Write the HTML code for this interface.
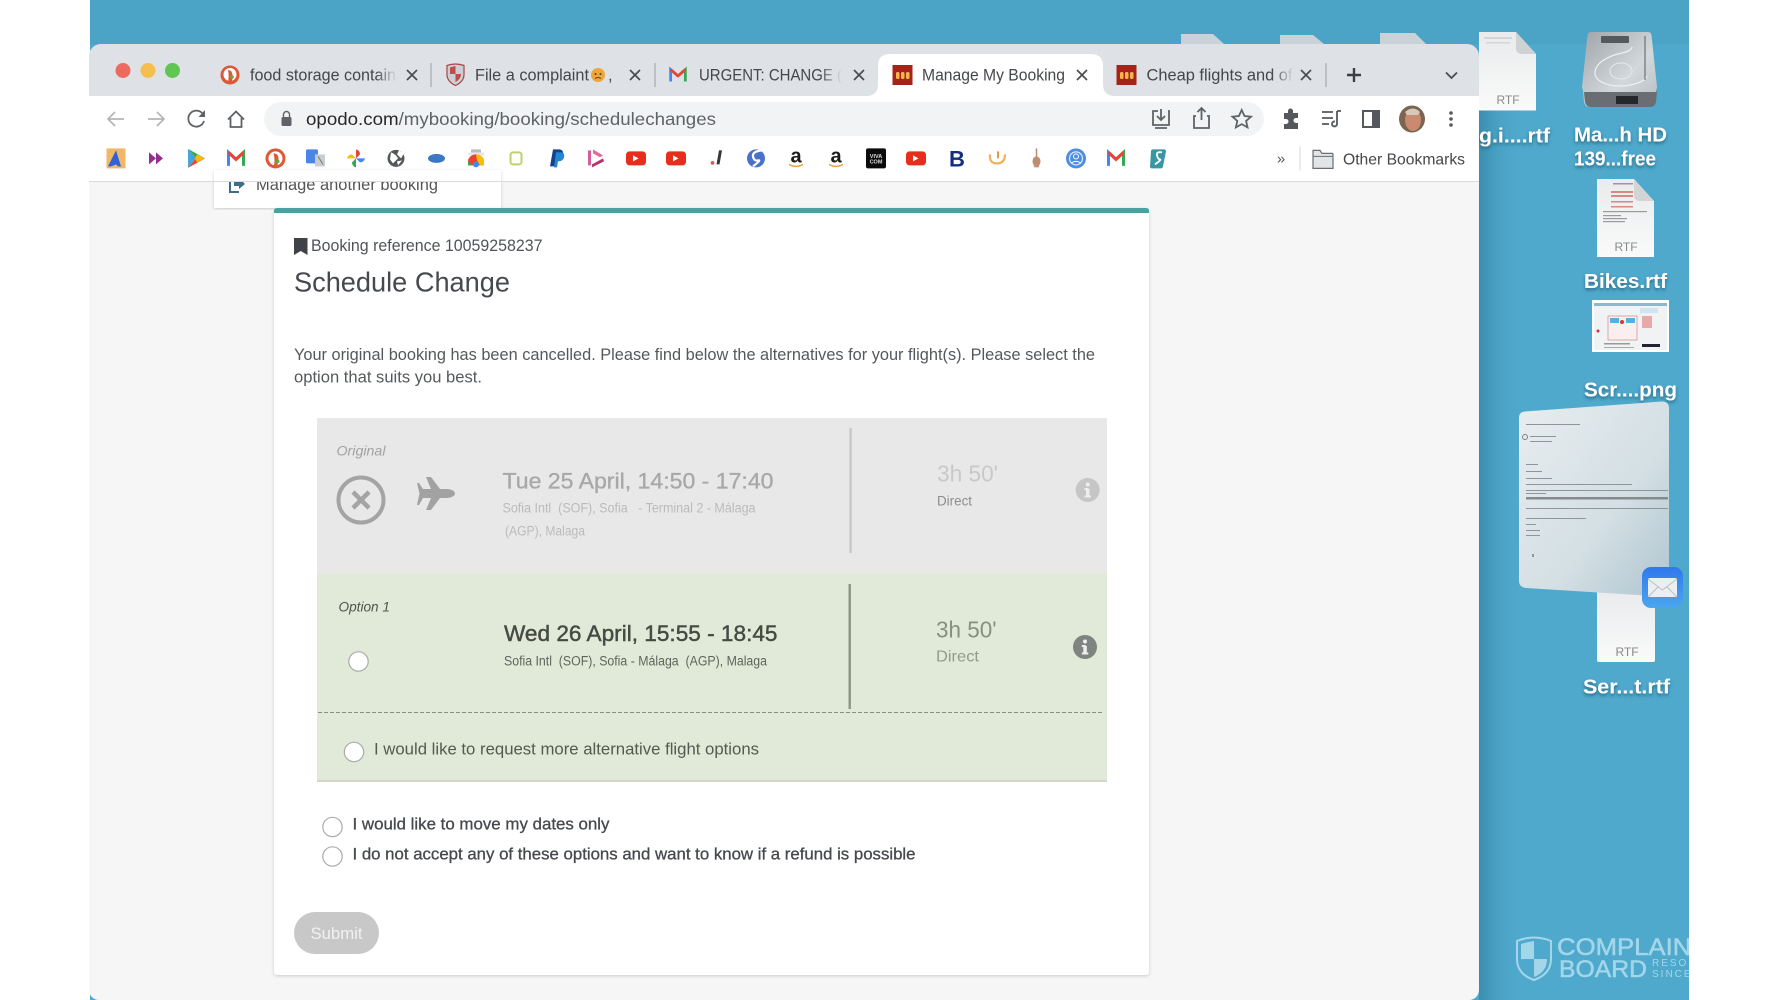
<!DOCTYPE html>
<html lang="en"><head><meta charset="utf-8"><title>Manage My Booking</title>
<style>html,body{margin:0;padding:0;width:1778px;height:1000px;overflow:hidden;background:#fff}svg{display:block;filter:blur(.35px)}text{font-family:"Liberation Sans",sans-serif}.t{font-size:16.5px;fill:#45474a}.x{stroke:#4a4c50;stroke-width:1.7;fill:none}.ic{stroke:#5f6368;stroke-width:1.8;fill:none}.lb{font-size:20px;font-weight:700;fill:#fff;filter:url(#ts)}.rtf{font-size:12px;fill:#8a8a8a;text-anchor:middle}.r{fill:#fff;stroke:#a9aca9;stroke-width:1.2}</style></head><body>
<svg width="1778" height="1000" viewBox="0 0 1778 1000" xmlns="http://www.w3.org/2000/svg">
<defs>
<filter id="ts" x="-10%" y="-30%" width="120%" height="180%"><feDropShadow dx="0" dy="2" stdDeviation="1.6" flood-color="#1d4f66" flood-opacity=".75"/></filter>
<filter id="sh" x="-5%" y="-5%" width="110%" height="110%"><feDropShadow dx="0" dy="1" stdDeviation="1.5" flood-color="#000" flood-opacity=".18"/></filter>
<linearGradient id="wshadow" x1="0" x2="1" y1="0" y2="0"><stop offset="0" stop-color="#2f7f9f" stop-opacity=".65"/><stop offset="1" stop-color="#4fa9cc" stop-opacity="0"/></linearGradient>
<linearGradient id="fade" x1="0" x2="1" y1="0" y2="0"><stop offset="0" stop-color="#dee1e5" stop-opacity="0"/><stop offset="1" stop-color="#dee1e5"/></linearGradient>
<linearGradient id="mailw" x1="0" x2="1" y1="0" y2="1"><stop offset="0" stop-color="#e8edef"/><stop offset=".6" stop-color="#d3dfe4"/><stop offset="1" stop-color="#afc4cf"/></linearGradient>
<linearGradient id="mailb" x1="0" x2="0" y1="0" y2="1"><stop offset="0" stop-color="#2f78ee"/><stop offset="1" stop-color="#4ba6ee"/></linearGradient>
<linearGradient id="hd" x1="0" x2="1" y1="0" y2="1"><stop offset="0" stop-color="#9fa4a9"/><stop offset=".6" stop-color="#d2d8dc"/><stop offset="1" stop-color="#b8bdc2"/></linearGradient>
<linearGradient id="doc" x1="0" x2="0" y1="0" y2="1"><stop offset="0" stop-color="#e9ebec"/><stop offset="1" stop-color="#fafafa"/></linearGradient>
<clipPath id="win"><path d="M101 44H1467a12 12 0 0 1 12 12V990a10 10 0 0 1-10 10H99a10 10 0 0 1-10-10V56a12 12 0 0 1 12-12Z"/></clipPath>
<clipPath id="top182"><rect x="200" y="182" width="320" height="40"/></clipPath>
</defs>

<!-- desktop -->
<rect x="90" y="0" width="1599" height="1000" fill="#4fa9cc"/>
<rect x="90" y="0" width="1599" height="44" fill="#4ba4c6"/>
<rect x="1479" y="44" width="44" height="956" fill="url(#wshadow)"/>

<!-- peeking files -->
<g fill="#c9d2d6"><path d="M1181 34h32l11 10h-43z"/><path d="M1280 35h33l11 9h-44z"/><path d="M1380 33h35l11 11h-46z"/></g>

<!-- RTF 1 -->
<path d="M1479 32h37l20 22v56.500h-57z" fill="url(#doc)"/><path d="M1516 32l20 22h-14q-6 0-6-6z" fill="#cfd2d3"/><g fill="#d2d4d5"><rect x="1484" y="37" width="28" height="2"/><rect x="1486" y="42" width="24" height="1.500"/></g><text class="rtf" x="1508" y="104" font-size="12">RTF</text>
<text class="lb" x="1479" y="142.500" textLength="71" lengthAdjust="spacingAndGlyphs">g.i....rtf</text>

<!-- HDD -->
<path d="M1592 32h56q3 0 3.500 3l5.500 52q0 2-1 3l-1 12q-1 5-6 5h-59q-5 0-6-5l-1-12q-1-1-1-3l5.500-52q.5-3 4.500-3z" fill="url(#hd)"/>
<path d="M1584 92h73l-1 10q-1 5-6 5h-59q-5 0-6-5z" fill="#6a6e73"/>
<rect x="1601" y="36" width="28" height="7" rx="1" fill="#55595e"/>
<path d="M1632 47q-.5 4-10 6c-14 3-27 10-27 20 0 8 12 13 24 13 11 0 25-3 28-10" fill="none" stroke="#eef0f2" stroke-width="1.200"/>
<ellipse cx="1621" cy="71" rx="11" ry="8" fill="none" stroke="#e8eaec"/>
<path d="M1645 36v44" stroke="#6d7176" stroke-width="1.200"/>
<rect x="1616" y="96" width="22" height="8" fill="#25282b"/>
<text class="lb" x="1574" y="141.500" textLength="93" lengthAdjust="spacingAndGlyphs">Ma...h HD</text>
<text class="lb" x="1574" y="165.500" textLength="82" lengthAdjust="spacingAndGlyphs">139...free</text>

<!-- Bikes -->
<path d="M1597 179h37l20 22v56h-57z" fill="url(#doc)"/><path d="M1634 179l20 22h-14q-6 0-6-6z" fill="#d2d4d5"/>
<g fill="#9a9a9a"><rect x="1613" y="183" width="20" height="1.500"/><rect x="1611" y="191" width="22" height="2" fill="#d98a80"/><rect x="1611" y="195" width="22" height="2" fill="#d98a80"/><rect x="1611" y="201" width="22" height="1.500" fill="#d98a80"/><rect x="1611" y="206" width="22" height="1.500" fill="#d98a80"/><rect x="1603" y="211" width="44" height="1.200"/><rect x="1603" y="215" width="18" height="1.200"/><rect x="1603" y="218" width="24" height="1.200"/><rect x="1603" y="221" width="22" height="1.200"/></g>
<text class="rtf" x="1626" y="251">RTF</text>
<text class="lb" x="1584" y="288" textLength="83" lengthAdjust="spacingAndGlyphs">Bikes.rtf</text>

<!-- screenshot -->
<rect x="1592" y="300" width="77" height="52" fill="#fff"/><rect x="1594" y="303" width="73" height="47" fill="#f0f2f3"/><rect x="1594" y="303" width="73" height="3" fill="#8fb7cc"/>
<rect x="1608" y="316" width="29" height="24" fill="#fbeeee" stroke="#c77" stroke-width=".6"/><rect x="1610" y="318" width="9" height="5" fill="#4fb2e4"/><rect x="1626" y="318" width="9" height="5" fill="#4fb2e4"/><circle cx="1622" cy="322" r="2" fill="#d33"/><rect x="1642" y="316" width="10" height="12" fill="#e9a9a9"/><rect x="1642" y="344" width="18" height="3" fill="#223"/>
<circle cx="1598" cy="331" r="1.500" fill="#c33"/><rect x="1640" y="308" width="18" height="5" fill="#cfe3f2"/><rect x="1604" y="343" width="26" height="1.500" fill="#999"/><rect x="1604" y="347" width="30" height="1" fill="#aaa"/>
<text class="lb" x="1584" y="396.500" textLength="93" lengthAdjust="spacingAndGlyphs">Scr....png</text>

<!-- Ser doc under mail -->
<path d="M1597 590h58v70a2 2 0 0 1-2 2h-54a2 2 0 0 1-2-2z" fill="url(#doc)"/><text class="rtf" x="1627" y="656">RTF</text>
<text class="lb" x="1583" y="693.500" textLength="87" lengthAdjust="spacingAndGlyphs">Ser...t.rtf</text>

<!-- mail window -->
<path d="M1525 411.500L1662 401.500q7 0 7 7V597L1526 588q-7-1-7-7V418q0-6 6-6.500z" fill="url(#mailw)"/>
<g fill="#8f969b"><rect x="1526" y="424" width="54" height="1"/><rect x="1530" y="436" width="26" height="1"/><rect x="1530" y="441" width="22" height="1"/><rect x="1526" y="464" width="12" height="1"/><rect x="1526" y="471" width="16" height="1"/><rect x="1526" y="478" width="26" height="1"/><rect x="1526" y="484" width="106" height="1"/><rect x="1526" y="490" width="142" height="1"/><rect x="1526" y="493" width="20" height="1"/><rect x="1526" y="497" width="142" height="2.500" fill="#858a8e"/><rect x="1526" y="508" width="142" height="1"/><rect x="1526" y="518" width="60" height="1"/><rect x="1526" y="524" width="10" height="1"/><rect x="1526" y="530" width="14" height="1"/><rect x="1526" y="535" width="14" height="1"/><circle cx="1525" cy="437" r="2.500" fill="none" stroke="#7a8085"/><rect x="1532" y="554" width="2" height="3"/></g>
<rect x="1642" y="567" width="41" height="41" rx="9" fill="url(#mailb)"/>
<rect x="1648" y="578" width="29" height="19" rx="2" fill="#eceff2"/><path d="M1648 579l14.500 11 14.500-11M1648 597l10-10M1677 597l-10-10" fill="none" stroke="#b9bec4"/>

<!-- watermark -->
<path d="M1517 941q17-7 34 0v18q0 15-17 21-17-6-17-21z" fill="none" stroke="#a4d6ea" stroke-width="2"/>
<path d="M1521 944q6-2 13-3v18h-13zM1534 959h13q0 13-13 18z" fill="#a4d6ea"/>
<text x="1557" y="955" font-size="24" fill="#a4d6ea" stroke="#a4d6ea" stroke-width=".5" textLength="150" lengthAdjust="spacingAndGlyphs">COMPLAINT</text>
<text x="1559" y="977" font-size="24" fill="#a4d6ea" stroke="#a4d6ea" stroke-width=".5" textLength="88" lengthAdjust="spacingAndGlyphs">BOARD</text>
<text x="1652" y="966" font-size="10" fill="#a4d6ea" letter-spacing="2">RESOLVED</text>
<text x="1652" y="977" font-size="10" fill="#a4d6ea" letter-spacing="2">SINCE</text>

<!-- window -->
<g clip-path="url(#win)">
<rect x="89" y="44" width="1390" height="52" fill="#dee1e5"/>
<rect x="89" y="96" width="1390" height="86" fill="#fff"/>
<rect x="89" y="181" width="1390" height="1" fill="#d8dadc"/>
<rect x="89" y="182" width="1390" height="818" fill="#f6f6f6"/>

<circle cx="123" cy="70.500" r="7.500" fill="#ed6a5e"/><circle cx="148" cy="70.500" r="7.500" fill="#f4bf4f"/><circle cx="172.500" cy="70.500" r="7.500" fill="#61c554"/>

<!-- active tab -->
<path d="M866 96q12 0 12-12V66q0-12 12-12h201q12 0 12 12v18q0 12 12 12z" fill="#fff"/>

<!-- tab 1 -->
<circle cx="230" cy="75" r="9.500" fill="#de5833"/><circle cx="230" cy="74.500" r="6.500" fill="#fff"/><path d="M228 70q4 0 4.500 5t-2 9h-3q2-7 .5-14z" fill="#de5833"/><circle cx="232" cy="77" r="1.800" fill="#67a742"/>
<text class="t" x="250" y="80.500" textLength="146" lengthAdjust="spacingAndGlyphs">food storage contain</text>
<rect x="376" y="62" width="21" height="26" fill="url(#fade)"/>
<path class="x" d="M407 70l10 10M417 70l-10 10"/>
<rect x="430.500" y="63" width="1" height="24" fill="#9b9ea2"/>
<!-- tab 2 -->
<path d="M447 65.500q8.500-3 17 0v9q0 7-8.500 11-8.500-4-8.500-11z" fill="#c9d0d4" stroke="#a44" stroke-width="1.200"/><path d="M450 67.500l5.500-1.500v8h-5.500zM455.500 74h5.500q0 5-5.500 8z" fill="#c34a4a"/>
<text class="t" x="475" y="80.500" textLength="114" lengthAdjust="spacingAndGlyphs">File a complaint</text>
<circle cx="598" cy="75" r="7" fill="#eda63a"/><circle cx="595.500" cy="74" r="1" fill="#6b3a1a"/><circle cx="600.500" cy="74" r="1" fill="#6b3a1a"/><path d="M595 78.500q3-2 6 0" stroke="#6b3a1a" fill="none"/>
<text class="t" x="608" y="80.500">,</text>
<path class="x" d="M630 70l10 10M640 70l-10 10"/>
<rect x="654.500" y="63" width="1" height="24" fill="#9b9ea2"/>
<!-- tab 3 -->
<g transform="translate(678,75) scale(.92)"><path d="M-8 7V-6L0 1" fill="none" stroke="#4285f4" stroke-width="3"/><path d="M8 7V-6L0 1" fill="none" stroke="#34a853" stroke-width="3"/><path d="M-8 -6L0 1 8 -6" fill="none" stroke="#ea4335" stroke-width="3"/></g>
<text class="t" x="699" y="80.500" textLength="143" lengthAdjust="spacingAndGlyphs">URGENT: CHANGE (</text>
<rect x="820" y="62" width="22" height="26" fill="url(#fade)"/>
<path class="x" d="M854 70l10 10M864 70l-10 10"/>
<!-- tab 4 -->
<rect x="892.500" y="65" width="20" height="20" fill="#a6231a"/><g fill="#f2b84b"><rect x="896" y="72" width="3.500" height="7" rx="1.500"/><rect x="901" y="72" width="3.500" height="7" rx="1.500"/><rect x="906" y="72" width="3.500" height="7" rx="1.500"/></g>
<text class="t" x="922" y="80.500" textLength="143" lengthAdjust="spacingAndGlyphs">Manage My Booking</text>
<path class="x" d="M1077 70l10 10M1087 70l-10 10"/>
<!-- tab 5 -->
<rect x="1116.500" y="65" width="20" height="20" fill="#a6231a"/><g fill="#f2b84b"><rect x="1120" y="72" width="3.500" height="7" rx="1.500"/><rect x="1125" y="72" width="3.500" height="7" rx="1.500"/><rect x="1130" y="72" width="3.500" height="7" rx="1.500"/></g>
<text class="t" x="1146.500" y="80.500" textLength="146" lengthAdjust="spacingAndGlyphs">Cheap flights and of</text>
<rect x="1272" y="62" width="22" height="26" fill="url(#fade)"/>
<path class="x" d="M1301 70l10 10M1311 70l-10 10"/>
<rect x="1325.500" y="63" width="1" height="24" fill="#9b9ea2"/>
<path d="M1354 68v14M1347 75h14" stroke="#3c3e42" stroke-width="2.400" fill="none"/>
<path d="M1446 72.500l5.500 5.500 5.500-5.500" fill="none" stroke="#4a4c50" stroke-width="1.800"/>

<!-- toolbar -->
<rect x="264" y="102" width="1000" height="34" rx="17" fill="#f1f3f4"/>
<path d="M123 119h-16M114 112l-7 7 7 7" fill="none" stroke="#b2b5b8" stroke-width="1.700" transform="translate(1,0)"/>
<path d="M149 119h16M158 112l7 7-7 7" fill="none" stroke="#b2b5b8" stroke-width="1.700" transform="translate(-1,0)"/>
<path class="ic" d="M203.500 115a8 8 0 1 0 .5 6"/><path d="M205 110v7h-6.500z" fill="#5f6368"/>
<path class="ic" d="M228 119.500l8-8 8 8M230.500 118v9h11v-9"/>
<rect x="281.500" y="117" width="10" height="9" rx="1.500" fill="#5f6368"/><path d="M283.500 117v-2.500a3 3 0 0 1 6 0v2.500" fill="none" stroke="#5f6368" stroke-width="1.400"/>
<text x="306" y="125" font-size="17.500" textLength="410" lengthAdjust="spacingAndGlyphs"><tspan fill="#26282b">opodo.com</tspan><tspan fill="#5f6368">/mybooking/booking/schedulechanges</tspan></text>
<path class="ic" d="M1158 111h-5v14h16v-14h-1M1161 109v11M1157 116l4 4 4-4M1155 128h12" stroke="#4a4d52"/>
<path class="ic" d="M1196 116h-2v12h15v-12h-2M1201.500 120v-12M1197.500 112l4-4 4 4" stroke="#4a4d52"/>
<path class="ic" d="M1241.700 110l2.800 6 6.500.7-4.900 4.300 1.400 6.400-5.800-3.300-5.800 3.300 1.400-6.400-4.900-4.300 6.500-.7z" stroke="#4a4d52"/>
<path d="M1285 113h4v-2a2.500 2.500 0 0 1 5 0v2h5v5h-2a2.500 2.500 0 0 0 0 5h2v6h-14v-5h2a2.500 2.500 0 0 0 0-5h-2z" fill="#55585c" transform="translate(-1,0)"/>
<path d="M1323 112h11M1323 118h11M1323 124h7M1338 111v13a2.500 2.500 0 1 1-2-2.500M1338 111h4" fill="none" stroke="#55585c" stroke-width="1.800" transform="translate(-1,0)"/>
<rect x="1363" y="111" width="16" height="16" fill="none" stroke="#55585c" stroke-width="2"/><rect x="1372" y="111" width="7" height="16" fill="#55585c"/>
<ellipse cx="1412" cy="119" rx="13" ry="13.500" fill="#7a6650"/><ellipse cx="1413" cy="120" rx="8" ry="11" fill="#c98a70"/><path d="M1405 112q8-7 15 0l-2 3h-11z" fill="#d8c8bc"/>
<g fill="#55585c"><circle cx="1451" cy="113" r="1.800"/><circle cx="1451" cy="119" r="1.800"/><circle cx="1451" cy="125" r="1.800"/></g>

<!-- bookmarks -->
<g transform="translate(0,-.6)">
<rect x="106.500" y="149" width="19" height="20" fill="#efb768"/><path d="M116 151l5 16h-3l-2-2-5 2h-3z" fill="#2e62d9"/>
<path d="M149 153v12l7-6zM156 153v12l7-6z" fill="#93308f"/>
<path d="M188 149.500l8 9.500-8 9.500z" fill="#4aa4d8"/><path d="M188 149.500l8 9.500 9 0z" fill="#34a853"/><path d="M188 168.500l8-9.500 9 0z" fill="#ea4335"/><path d="M197 155l7.500 4-7.500 4-2-4z" fill="#fbbc04"/>
<g transform="translate(236,159)"><path d="M-7.500 7.500V-6L0 1" fill="none" stroke="#4285f4" stroke-width="3"/><path d="M7.500 7.500V-6L0 1" fill="none" stroke="#34a853" stroke-width="3"/><path d="M-7.500 -6L0 1 7.500 -6" fill="none" stroke="#ea4335" stroke-width="3"/></g>
<g transform="translate(275.500,159)"><circle r="10" fill="#de5833"/><circle r="7" fill="#fff"/><path d="M-2-5q5 0 5 5t-2 9h-3q2-7 0-14z" fill="#de5833"/><circle cx="2" cy="3" r="2" fill="#67a742"/></g>
<rect x="306" y="150" width="12" height="14" rx="1.500" fill="#4a86e8"/><rect x="315" y="155" width="10" height="12" fill="#c9ccd0"/><path d="M318 157l5 8" stroke="#777"/>
<g transform="translate(356,159)"><path d="M0 0V-9a5 5 0 0 1 4 5z" fill="#ea4335"/><path d="M0 0H9a5 5 0 0 1-5 4z" fill="#4285f4"/><path d="M0 0V9a5 5 0 0 1-4-5z" fill="#34a853"/><path d="M0 0H-9a5 5 0 0 1 5-4z" fill="#fbbc04"/></g>
<circle cx="396" cy="159" r="8.500" fill="#55595d"/><path d="M391 153q5 2 7 6l-5 5-3-4zM399 151l5 3-3 5-4-4zM402 161l-4 5-1-4z" fill="#fff"/>
<ellipse cx="436.500" cy="159" rx="8.500" ry="4.500" fill="#3b78c4"/>
<rect x="471" y="150" width="10" height="4" rx="1" fill="#bbb"/><rect x="468" y="153" width="16" height="3" fill="#e8e8e8"/><path d="M468 166v-4a8 7 0 0 1 16 0v4z" fill="#ea4335"/><path d="M476 155a8 7 0 0 1 8 7v4h-4l-3-5z" fill="#fbbc04"/><path d="M468 166v-4l5 4z" fill="#34a853"/><circle cx="476" cy="165" r="3" fill="#4285f4"/>
<rect x="510.500" y="153" width="11" height="12" rx="2.500" fill="none" stroke="#bdd26e" stroke-width="2"/>
<path d="M553 150h7q4 1 3 6t-7 5l-1 6h-5z" fill="#17418f"/><path d="M556 153h6q3 1 2 5t-6 4l-1 6h-3z" fill="#1f89cf"/>
<path d="M588 151l3 0v15l-3 0z" fill="#d85b9a"/><path d="M593 150l10 6-3 2-7-4z" fill="#e46aa0"/><path d="M592 168l12-6-1-3-11 6z" fill="#b8336b"/>
<g fill="#e62e1f"><rect x="626" y="152" width="20" height="14" rx="3.500"/><rect x="666" y="152" width="20" height="14" rx="3.500"/><rect x="906" y="152" width="20" height="14" rx="3.500"/></g>
<path d="M633 156l5.500 3-5.500 3zM673 156l5.500 3-5.500 3zM913 156l5.500 3-5.500 3z" fill="#fff"/>
<path d="M719 151h3l-2.500 14h-3z" fill="#33373b"/><circle cx="712.500" cy="163.500" r="1.900" fill="#e2574c"/>
<circle cx="756" cy="159" r="9" fill="#4a73c8"/><path d="M762 151q-10 1-9 6t5 4-5 6" fill="none" stroke="#fff" stroke-width="2.200"/>
<text x="796" y="163" font-size="20" font-weight="700" fill="#1a1a1a" text-anchor="middle">a</text><path d="M789 165q7 4 14 0" fill="none" stroke="#e3a33a" stroke-width="1.400"/>
<text x="836" y="163" font-size="20" font-weight="700" fill="#1a1a1a" text-anchor="middle">a</text><path d="M829 165q7 4 14 0" fill="none" stroke="#e3a33a" stroke-width="1.400"/>
<rect x="866" y="149" width="20" height="20" rx="2" fill="#0a0a0a"/><text x="876" y="158.500" font-size="5.500" font-weight="700" fill="#ddd" text-anchor="middle">VIVA</text><text x="876" y="164" font-size="5.500" font-weight="700" fill="#ddd" text-anchor="middle">COM</text>
<text x="957" y="167" font-size="22" font-weight="700" fill="#12307f" text-anchor="middle">B</text>
<path d="M990 155q-1 9 7 9t8-9" fill="none" stroke="#eeb15e" stroke-width="2.200"/><path d="M998 152v7" stroke="#e29a3c" stroke-width="2"/>
<path d="M1033 159h7l-1 9h-5z" fill="#c89a80"/><path d="M1036.500 149v10" stroke="#b98a70" stroke-width="1.500"/><ellipse cx="1036.500" cy="162" rx="4" ry="5" fill="#bf8e72"/>
<circle cx="1076" cy="159" r="10" fill="#4f8ddf"/><circle cx="1076" cy="159" r="6.500" fill="none" stroke="#dbe9fa" stroke-width="1.200"/><circle cx="1076" cy="157" r="2.500" fill="none" stroke="#fff"/><path d="M1071 164q5-4 10 0" fill="none" stroke="#fff"/>
<g transform="translate(1116,159)"><path d="M-7.500 7.500V-6L0 1" fill="none" stroke="#4285f4" stroke-width="3"/><path d="M7.500 7.500V-6L0 1" fill="none" stroke="#34a853" stroke-width="3"/><path d="M-7.500 -6L0 1 7.500 -6" fill="none" stroke="#ea4335" stroke-width="3"/></g>
<path d="M1153 150h11q2 0 2 2l-3 15q-.5 2-2 2h-9q-2 0-2-2l1-15q0-2 2-2z" fill="#3a95a5"/><path d="M1162 153q-6-1-5 3t3 4-5 5" fill="none" stroke="#fff" stroke-width="1.800"/>
<text x="1281" y="164" font-size="15" fill="#55585c" text-anchor="middle">»</text>
<rect x="1299.500" y="147" width="1" height="24" fill="#d6d8da"/>
<path d="M1314 151h7l2 3h10q1 0 1 1v14h-20z" fill="#e2e4e6" stroke="#6b6e72" stroke-width="1.200" transform="translate(-1,0)"/><path d="M1313 157h20" stroke="#6b6e72" stroke-width="1"/>
<text x="1343" y="165" font-size="16" fill="#45474a" textLength="122" lengthAdjust="spacingAndGlyphs">Other Bookmarks</text>
</g>

<!-- page content -->
<rect x="214" y="170" width="287" height="38" fill="#fff" filter="url(#sh)"/>
<g clip-path="url(#top182)"><text x="256" y="190" font-size="16.500" fill="#555" textLength="182" lengthAdjust="spacingAndGlyphs">Manage another booking</text>
<path d="M230 180v12h9" fill="none" stroke="#3e6d86" stroke-width="2"/><path d="M234 181h5v-3l6 6-6 5v-3h-5z" fill="#3e6d86"/></g>
<rect x="89" y="181" width="1390" height="1" fill="#d8dadc"/>

<rect x="274" y="208" width="875" height="767" rx="3" fill="#fff" filter="url(#sh)"/>
<path d="M274 213v-2q0-3 3-3h869q3 0 3 3v2z" fill="#4f9ea1"/>

<path d="M294 238h13.500v17l-6.750-4-6.750 4z" fill="#3f4347"/>
<text x="311" y="251" font-size="16.500" fill="#50545a" textLength="231.500" lengthAdjust="spacingAndGlyphs">Booking reference 10059258237</text>
<text x="294" y="291.500" font-size="27.500" fill="#46494d" textLength="216" lengthAdjust="spacingAndGlyphs">Schedule Change</text>
<text x="294" y="360" font-size="16.300" fill="#55585c" textLength="801" lengthAdjust="spacingAndGlyphs">Your original booking has been cancelled. Please find below the alternatives for your flight(s). Please select the</text>
<text x="294" y="382.500" font-size="16.300" fill="#55585c" textLength="188" lengthAdjust="spacingAndGlyphs">option that suits you best.</text>

<rect x="317" y="418" width="790" height="155" fill="#e8e8e8"/>
<rect x="317" y="573" width="790" height="208" fill="#e1ead8"/>
<rect x="317" y="780" width="790" height="2" fill="#d2d9cb"/>

<text x="336.500" y="455.500" font-size="14" font-style="italic" fill="#a2a2a2" textLength="49" lengthAdjust="spacingAndGlyphs">Original</text>
<circle cx="361" cy="500" r="22.500" fill="none" stroke="#a4a4a4" stroke-width="4"/>
<path d="M353 492l16 16M369 492l-16 16" stroke="#a4a4a4" stroke-width="4.500" fill="none"/>
<path d="M455 493.500C455 490.500 450 489 446 489L440 489L431 477L426 477L431 489L423 489L419 483L417 483L419.500 493.500L417 505L419 505L423 498L431 498L426 510L431 510L440 498L446 498C450 498 455 496.500 455 493.500Z" fill="#a2a2a2"/>
<text x="502.500" y="488.500" font-size="22.500" fill="#a8a8a8" stroke="#a8a8a8" stroke-width=".35" textLength="271" lengthAdjust="spacingAndGlyphs">Tue 25 April, 14:50 - 17:40</text>
<text x="502.500" y="512.500" font-size="13.500" fill="#bbb" textLength="253" lengthAdjust="spacingAndGlyphs" xml:space="preserve">Sofia Intl  (SOF), Sofia   - Terminal 2 - Málaga</text>
<text x="505" y="535.500" font-size="13.500" fill="#bbb" textLength="80" lengthAdjust="spacingAndGlyphs">(AGP), Malaga</text>
<rect x="849.500" y="428" width="2.200" height="125" fill="#c5c5c5"/>
<text x="937" y="481.500" font-size="23" fill="#c9c9c9" textLength="61" lengthAdjust="spacingAndGlyphs">3h 50'</text>
<text x="937" y="505.500" font-size="13.500" fill="#8d8d8d" textLength="35" lengthAdjust="spacingAndGlyphs">Direct</text>
<circle cx="1087.700" cy="490" r="12" fill="#c6c6c6"/><rect x="1086" y="489" width="3.500" height="8" fill="#eee"/><rect x="1084.500" y="495.500" width="6.500" height="2" fill="#eee"/><rect x="1084.500" y="488" width="4" height="2" fill="#eee"/><circle cx="1087.700" cy="484.500" r="2" fill="#eee"/>

<text x="338.500" y="611.500" font-size="14" font-style="italic" fill="#50544e" textLength="51.500" lengthAdjust="spacingAndGlyphs">Option 1</text>
<circle class="r" cx="358.500" cy="661.500" r="9.700"/>
<text x="504" y="641" font-size="22.500" fill="#464a43" stroke="#464a43" stroke-width=".45" textLength="273.500" lengthAdjust="spacingAndGlyphs">Wed 26 April, 15:55 - 18:45</text>
<text x="504" y="665.500" font-size="13.500" fill="#60645c" textLength="263" lengthAdjust="spacingAndGlyphs" xml:space="preserve">Sofia Intl  (SOF), Sofia - Málaga  (AGP), Malaga</text>
<rect x="848.500" y="584" width="2.400" height="125" fill="#8a9584"/>
<text x="936" y="637.500" font-size="23" fill="#868f80" textLength="60.500" lengthAdjust="spacingAndGlyphs">3h 50'</text>
<text x="936" y="661.500" font-size="16" fill="#929b8c" textLength="43" lengthAdjust="spacingAndGlyphs">Direct</text>
<circle cx="1085" cy="647" r="12" fill="#7f8480"/><rect x="1083.300" y="646" width="3.500" height="8" fill="#eee"/><rect x="1081.800" y="652.500" width="6.500" height="2" fill="#eee"/><rect x="1081.800" y="645" width="4" height="2" fill="#eee"/><circle cx="1085" cy="641.500" r="2" fill="#eee"/>
<path d="M318 712.500H1104" stroke="#87917f" stroke-width="1" stroke-dasharray="4 2" fill="none"/>

<circle class="r" cx="354" cy="752" r="9.700"/>
<text x="374" y="754.500" font-size="16.500" fill="#55594f" textLength="385" lengthAdjust="spacingAndGlyphs">I would like to request more alternative flight options</text>
<circle class="r" cx="332.500" cy="827" r="9.700"/>
<text x="352.500" y="829.500" font-size="16.500" fill="#46494d" stroke="#46494d" stroke-width=".3" textLength="257" lengthAdjust="spacingAndGlyphs">I would like to move my dates only</text>
<circle class="r" cx="332.500" cy="856.500" r="9.700"/>
<text x="352.500" y="859.500" font-size="16.500" fill="#46494d" stroke="#46494d" stroke-width=".3" textLength="563" lengthAdjust="spacingAndGlyphs">I do not accept any of these options and want to know if a refund is possible</text>
<rect x="294" y="912" width="85" height="42" rx="21" fill="#c8c8c8"/>
<text x="310.500" y="939" font-size="17" fill="#f1f1f1" textLength="52" lengthAdjust="spacingAndGlyphs">Submit</text>
</g>

<!-- white margins -->
<rect x="0" y="0" width="89" height="1000" fill="#fff"/>
<rect x="1689" y="0" width="89" height="1000" fill="#fff"/>
</svg>
</body></html>
